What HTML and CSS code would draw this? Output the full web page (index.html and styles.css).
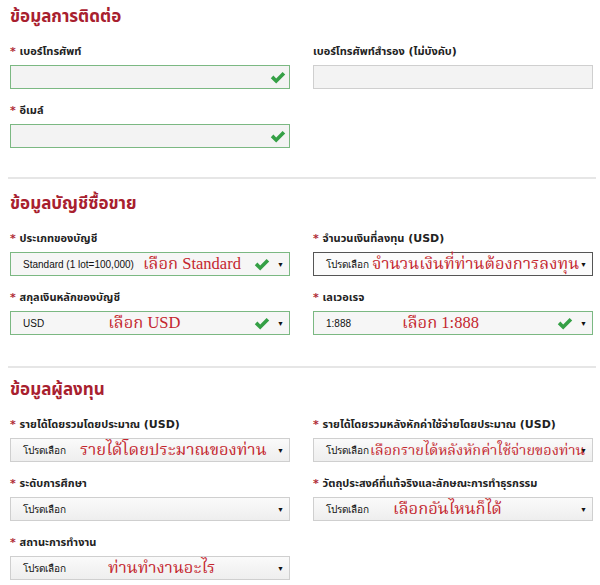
FILE: index.html
```html
<!DOCTYPE html>
<html lang="th">
<head>
<meta charset="utf-8">
<title>ข้อมูล</title>
<link rel="stylesheet" href="styles.css">
</head>
<body>
<svg width="0" height="0" class="defs">
  <defs>
    <symbol id="chk" viewBox="0 0 16 13">
      <path d="M0.8 7.2 L3.4 4.6 L6.2 7.4 L12.6 1 L15.2 3.6 L6.2 12.4 Z" fill="#35a046"/>
    </symbol>
  </defs>
</svg>

<section class="sec">
  <h2 class="title">ข้อมูลการติดต่อ</h2>
  <div class="grid">
    <div class="field">
      <label class="lbl"><span class="req">*</span> เบอร์โทรศัพท์</label>
      <div class="box ok"><svg class="chk"><use href="#chk"/></svg></div>
    </div>
    <div class="field">
      <label class="lbl">เบอร์โทรศัพท์สำรอง (ไม่บังคับ)</label>
      <div class="box"></div>
    </div>
    <div class="field">
      <label class="lbl"><span class="req">*</span> อีเมล์</label>
      <div class="box ok"><svg class="chk"><use href="#chk"/></svg></div>
    </div>
  </div>
</section>

<hr class="sep sep1">

<section class="sec">
  <h2 class="title">ข้อมูลบัญชีซื้อขาย</h2>
  <div class="grid">
    <div class="field">
      <label class="lbl"><span class="req">*</span> ประเภทของบัญชี</label>
      <div class="sel ok"><span class="val">Standard (1 lot=100,000)</span><span class="note n1">เลือก Standard</span><svg class="chk"><use href="#chk"/></svg><span class="arr">▼</span></div>
    </div>
    <div class="field">
      <label class="lbl"><span class="req">*</span> จำนวนเงินที่ลงทุน (USD)</label>
      <div class="sel focus"><span class="val">โปรดเลือก</span><span class="note n2">จำนวนเงินที่ท่านต้องการลงทุน</span><span class="arr">▼</span></div>
    </div>
    <div class="field">
      <label class="lbl"><span class="req">*</span> สกุลเงินหลักของบัญชี</label>
      <div class="sel ok"><span class="val">USD</span><span class="note n3">เลือก USD</span><svg class="chk"><use href="#chk"/></svg><span class="arr">▼</span></div>
    </div>
    <div class="field">
      <label class="lbl"><span class="req">*</span> เลเวอเรจ</label>
      <div class="sel ok"><span class="val">1:888</span><span class="note n4">เลือก 1:888</span><svg class="chk"><use href="#chk"/></svg><span class="arr">▼</span></div>
    </div>
  </div>
</section>

<hr class="sep sep2">

<section class="sec">
  <h2 class="title">ข้อมูลผู้ลงทุน</h2>
  <div class="grid">
    <div class="field">
      <label class="lbl"><span class="req">*</span> รายได้โดยรวมโดยประมาณ (USD)</label>
      <div class="sel"><span class="val">โปรดเลือก</span><span class="note n5">รายได้โดยประมาณของท่าน</span><span class="arr">▼</span></div>
    </div>
    <div class="field">
      <label class="lbl"><span class="req">*</span> รายได้โดยรวมหลังหักค่าใช้จ่ายโดยประมาณ (USD)</label>
      <div class="sel"><span class="val">โปรดเลือก</span><span class="note n6">เลือกรายได้หลังหักค่าใช้จ่ายของท่าน</span><span class="arr">▼</span></div>
    </div>
    <div class="field">
      <label class="lbl"><span class="req">*</span> ระดับการศึกษา</label>
      <div class="sel"><span class="val">โปรดเลือก</span><span class="arr">▼</span></div>
    </div>
    <div class="field">
      <label class="lbl"><span class="req">*</span> วัตถุประสงค์ที่แท้จริงและลักษณะการทำธุรกรรม</label>
      <div class="sel"><span class="val">โปรดเลือก</span><span class="note n7">เลือกอันไหนก็ได้</span><span class="arr">▼</span></div>
    </div>
    <div class="field">
      <label class="lbl"><span class="req">*</span> สถานะการทำงาน</label>
      <div class="sel"><span class="val">โปรดเลือก</span><span class="note n8">ท่านทำงานอะไร</span><span class="arr">▼</span></div>
    </div>
  </div>
</section>
</body>
</html>
```

FILE: styles.css
```css
html, body {
  margin: 0;
  padding: 0;
  background: #ffffff;
}
body {
  width: 600px;
  height: 585px;
  overflow: hidden;
  font-family: Tahoma, "DejaVu Sans", "Noto Sans Thai", "Noto Sans", sans-serif;
  color: #222;
}
.defs { position: absolute; }
.sec {
  padding: 0 7px 0 10px;
}
.title {
  margin: 0;
  padding-top: 4px;
  height: 26px;
  line-height: 24px;
  font-size: 17px;
  font-weight: bold;
  color: #a8202e;
}
.grid {
  display: grid;
  grid-template-columns: 280px 280px;
  column-gap: 23px;
  margin-top: 14px;
}
.field {
  margin-bottom: 14px;
}
.lbl {
  display: block;
  height: 16px;
  line-height: 16px;
  margin-bottom: 5px;
  font-size: 11px;
  font-weight: bold;
  color: #222;
  white-space: nowrap;
}
.req {
  color: #b02a36;
}
.box, .sel {
  box-sizing: border-box;
  height: 24px;
  border: 1px solid #cfcfcf;
  background: #f3f3f3;
  display: flex;
  align-items: center;
}
.box.ok, .sel.ok {
  border-color: #7bb882;
}
.box {
  justify-content: flex-end;
  padding-right: 3px;
}
.sel {
  padding-left: 12px;
  padding-right: 5px;
  background: linear-gradient(#fafafa, #eeeeee);
  font-family: "Liberation Sans", Tahoma, "DejaVu Sans", sans-serif;
  font-size: 10px;
  color: #111;
  white-space: nowrap;
}
.sel.ok {
  background: #f6f6f6;
}
.sel.focus {
  border-color: #555;
  background: #fbfbfb;
}
.val {
  flex: none;
}
.chk {
  width: 16px;
  height: 13px;
  flex: none;
}
.sel .chk {
  margin-left: auto;
  margin-right: 7px;
}
.arr {
  flex: none;
  font-size: 7px;
  color: #111;
  margin-left: auto;
}
.sel .chk + .arr {
  margin-left: 0;
}
.note {
  flex: none;
  width: 0;
  overflow: visible;
  font-family: "Liberation Serif", "Noto Serif Thai", "Noto Sans Thai", serif;
  font-size: 16.5px;
  color: #c4262e;
  line-height: 22px;
}
.n1 { margin-left: 9px; }
.n2 { margin-left: 3px; }
.n3 { margin-left: 64px; }
.n4 { margin-left: 51px; }
.n5 { margin-left: 14px; }
.n6 { margin-left: 1px; font-size: 14.5px; }
.n7 { margin-left: 24px; }
.n8 { margin-left: 42px; }
.sep {
  border: 0;
  border-top: 2px solid #e6e6e6;
  height: 0;
}
.sep1 {
  margin: 15px 4px 8px 8px;
}
.sep2 {
  margin: 17px 4px 5px 8px;
}
```
